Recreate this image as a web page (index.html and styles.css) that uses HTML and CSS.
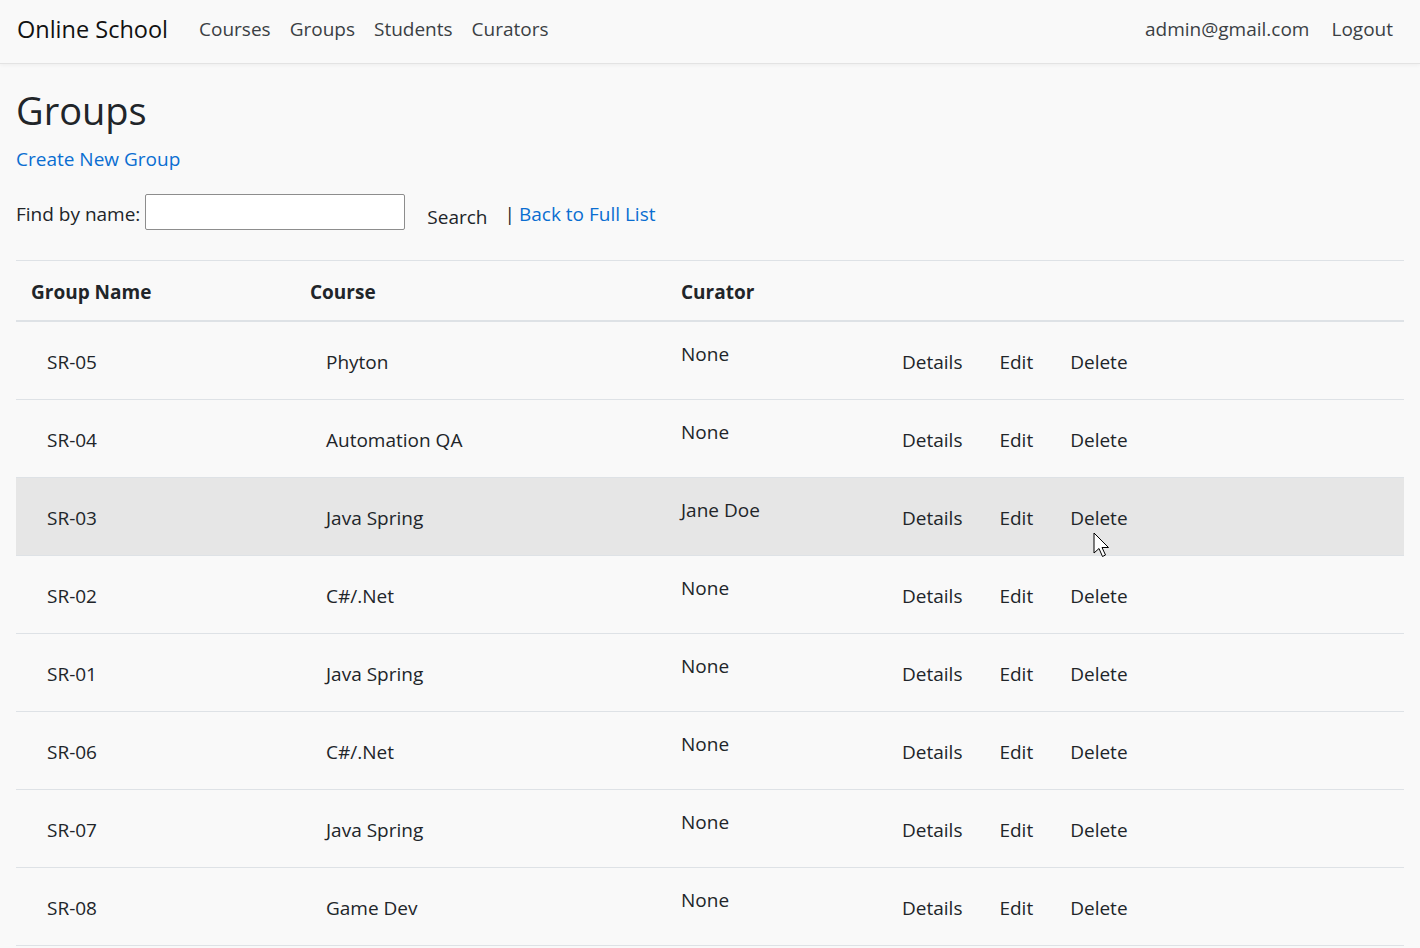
FILE: index.html
```html
<!DOCTYPE html>
<html lang="en">
<head>
<meta charset="utf-8">
<title>Groups - Online School</title>
<link rel="stylesheet" href="styles.css">
</head>
<body>
<header class="navbar">
  <div class="nav-left">
    <a class="brand" href="#">Online School</a>
    <nav class="nav-links">
      <a href="#">Courses</a>
      <a href="#">Groups</a>
      <a href="#">Students</a>
      <a href="#">Curators</a>
    </nav>
  </div>
  <div class="nav-right">
    <a href="#">admin@gmail.com</a>
    <a href="#">Logout</a>
  </div>
</header>
<main class="container">
  <h1 class="title">Groups</h1>
  <a class="link" href="#">Create New Group</a>
  <form class="search-form">
    <label class="find-label">Find by name:</label>
    <input class="find-input" type="text">
    <button class="search-btn" type="button">Search</button>
    <span class="sep"><span class="pipe">|</span><a class="link" href="#">Back to Full List</a></span>
  </form>
  <table class="groups">
    <thead>
      <tr>
        <th class="c-name">Group Name</th>
        <th class="c-course">Course</th>
        <th class="c-curator">Curator</th>
        <th class="c-actions"></th>
      </tr>
    </thead>
    <tbody>
      <tr><td class="d-name">SR-05</td><td class="d-course">Phyton</td><td class="d-curator">None</td><td class="d-actions"><a href="#">Details</a><a href="#">Edit</a><a href="#">Delete</a></td></tr>
      <tr><td class="d-name">SR-04</td><td class="d-course">Automation QA</td><td class="d-curator">None</td><td class="d-actions"><a href="#">Details</a><a href="#">Edit</a><a href="#">Delete</a></td></tr>
      <tr class="hover"><td class="d-name">SR-03</td><td class="d-course">Java Spring</td><td class="d-curator">Jane Doe</td><td class="d-actions"><a href="#">Details</a><a href="#">Edit</a><a href="#" class="has-cursor">Delete<svg class="cursor" width="20" height="28" viewBox="0 0 20 28"><path d="M1 1 L1 21 L6 16.5 L9.5 24.5 L12.5 23 L9 15.5 L15.5 15.5 Z" fill="#fff" stroke="#000" stroke-width="1" stroke-linejoin="round"/></svg></a></td></tr>
      <tr><td class="d-name">SR-02</td><td class="d-course">C#/.Net</td><td class="d-curator">None</td><td class="d-actions"><a href="#">Details</a><a href="#">Edit</a><a href="#">Delete</a></td></tr>
      <tr><td class="d-name">SR-01</td><td class="d-course">Java Spring</td><td class="d-curator">None</td><td class="d-actions"><a href="#">Details</a><a href="#">Edit</a><a href="#">Delete</a></td></tr>
      <tr><td class="d-name">SR-06</td><td class="d-course">C#/.Net</td><td class="d-curator">None</td><td class="d-actions"><a href="#">Details</a><a href="#">Edit</a><a href="#">Delete</a></td></tr>
      <tr><td class="d-name">SR-07</td><td class="d-course">Java Spring</td><td class="d-curator">None</td><td class="d-actions"><a href="#">Details</a><a href="#">Edit</a><a href="#">Delete</a></td></tr>
      <tr><td class="d-name">SR-08</td><td class="d-course">Game Dev</td><td class="d-curator">None</td><td class="d-actions"><a href="#">Details</a><a href="#">Edit</a><a href="#">Delete</a></td></tr>
    </tbody>
  </table>
</main>
</body>
</html>
```
FILE: styles.css
```css
* { box-sizing: border-box; }
html, body { margin: 0; padding: 0; }
body {
  background: #f9f9f9;
  color: #212529;
  font-family: "Open Sans", "Noto Sans", sans-serif;
  font-size: 19px;
  line-height: 1.5;
  overflow: hidden;
}
a { text-decoration: none; color: inherit; }

.navbar {
  height: 64px;
  display: flex;
  align-items: center;
  justify-content: space-between;
  padding: 0 27px 4px 17px;
  border-bottom: 1px solid #e3e3e3;
  box-shadow: 0 1px 4px rgba(0,0,0,0.05);
}
.nav-left { display: flex; align-items: center; }
.brand { font-size: 23.5px; color: #111; margin-right: 31px; }
.nav-links { display: flex; gap: 19px; }
.nav-links a, .nav-right a { color: #3b3f44; font-size: 19px; }
.nav-right { display: flex; gap: 22px; }

.container { padding: 0 16px; }
.title {
  font-size: 38px;
  font-weight: 400;
  margin: 22px 0 0;
  line-height: 48px;
  color: #212529;
}
.link { color: #0a6ed1; }
.title + .link { display: inline-block; margin-top: 11px; line-height: 28px; }

.search-form {
  display: flex;
  align-items: center;
  margin-top: 20px;
  height: 36px;
}
.find-label { margin-right: 5px; position: relative; top: 3px; }
.find-input {
  width: 260px;
  height: 36px;
  border: 1px solid #8d8d8d;
  border-radius: 2px;
  background: #fff;
  font: inherit;
}
.search-btn {
  font: inherit;
  background: none;
  border: 0;
  color: #212529;
  padding: 0;
  margin: 11px 0 0 22px;
}
.sep { margin: 5px 0 0 17px; display: flex; }
.pipe { margin-right: 4px; }

.groups {
  width: 1388px;
  margin-top: 30px;
  border-collapse: collapse;
  table-layout: fixed;
}
.groups th {
  text-align: left;
  font-weight: 700;
  padding: 4px 15px 0;
  height: 61px;
  border-top: 1px solid #dee2e6;
  border-bottom: 2px solid #dee2e6;
  vertical-align: middle;
}
.c-name { width: 279px; }
.c-course { width: 371px; }
.c-curator { width: 221px; }
.groups td {
  height: 78px;
  border-bottom: 1px solid #dee2e6;
  padding: 0 15px;
  vertical-align: middle;
}
.groups td.d-name, .groups td.d-course { padding-left: 31px; padding-top: 4px; }
.groups td.d-curator { vertical-align: top; padding-top: 18px; }
.groups td.d-actions { padding-top: 4px; white-space: nowrap; }
.d-actions a { margin-right: 37px; }
tr.hover td { background: #e6e6e6; }
.has-cursor { position: relative; }
.cursor { position: absolute; left: 23px; top: 27px; }
```
